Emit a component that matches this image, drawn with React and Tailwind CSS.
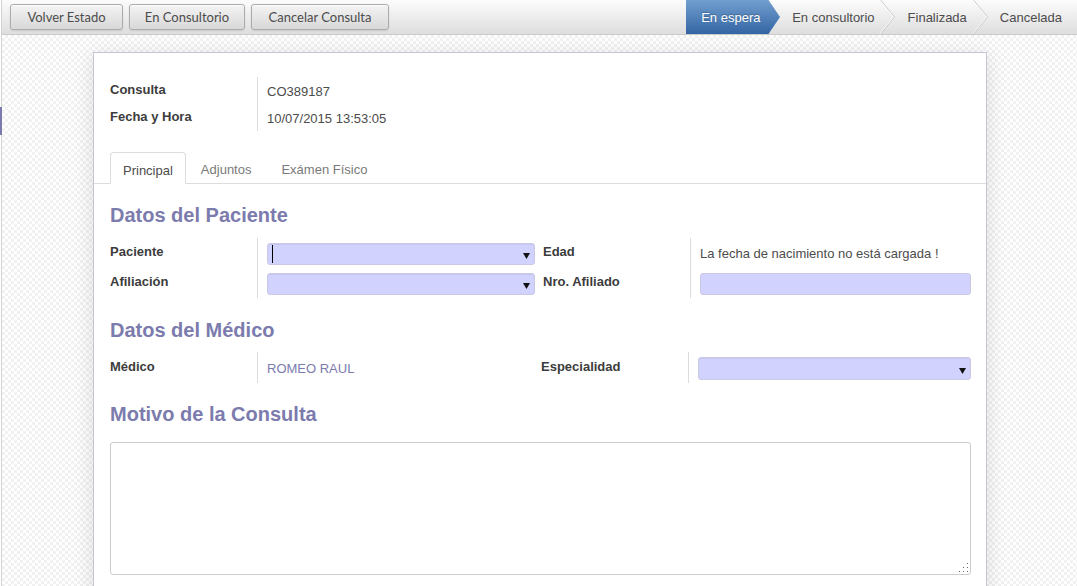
import React from "react";

function Chevron() {
  return (
    <svg width="16" height="34" viewBox="0 0 16 34" className="shrink-0">
      <polyline points="0.5,0 14.5,17 0.5,34" fill="none" stroke="#c8c8c8" strokeWidth="1" />
      <polyline points="-0.5,0 13.5,17 -0.5,34" fill="none" stroke="#ffffff" strokeWidth="1" opacity="0.8" />
    </svg>
  );
}

function ArrowDown() {
  return (
    <svg width="7" height="6" viewBox="0 0 7 6" className="shrink-0">
      <polygon points="0,0 7,0 3.5,6" fill="#111" />
    </svg>
  );
}

function ResizeDots() {
  const dots = [
    [9, 1],
    [9, 5], [5, 5],
    [9, 9], [5, 9], [1, 9],
  ];
  return (
    <svg width="11" height="11" viewBox="0 0 11 11" className="pointer-events-none absolute bottom-[2px] right-[2px]">
      {dots.map(([x, y], i) => (
        <rect key={i} x={x} y={y} width="1" height="1" fill="#666" />
      ))}
    </svg>
  );
}

function TopBar() {
  const btn =
    "h-[26px] rounded-[3px] border border-[#ababab] bg-gradient-to-b from-[#f4f4f4] to-[#d8d8d8] text-[13px] text-[#4c4c4c] font-['Lato','Open_Sans',sans-serif] shadow-[0_1px_2px_rgba(0,0,0,0.1),inset_0_1px_1px_rgba(255,255,255,0.9)] flex items-center justify-center";
  return (
    <div className="flex h-[35px] items-stretch border-b border-[#cacaca] bg-gradient-to-b from-[#fcfcfc] to-[#dedede]">
      <div className="flex items-center gap-[6px] pl-[8px]">
        <button className={btn + " w-[113px]"}>Volver Estado</button>
        <button className={btn + " w-[116px]"}>En Consultorio</button>
        <button className={btn + " w-[138px]"}>Cancelar Consulta</button>
      </div>
      <div className="ml-auto flex items-stretch text-[13px]">
        <div className="flex items-stretch">
          <div className="flex w-[82px] items-center bg-gradient-to-b from-[#729fcf] to-[#3465a4] pl-[15px] text-white [text-shadow:0_-1px_1px_rgba(0,0,0,0.25)]">
            En espera
          </div>
          <svg width="12" height="34" viewBox="0 0 12 34" className="shrink-0">
            <defs>
              <linearGradient id="ag" x1="0" y1="0" x2="0" y2="1">
                <stop offset="0" stopColor="#729fcf" />
                <stop offset="1" stopColor="#3465a4" />
              </linearGradient>
            </defs>
            <polygon points="0,0 0.5,0 12,17 0.5,34 0,34" fill="url(#ag)" />
          </svg>
        </div>
        <div className="flex items-center pl-[12px] pr-[5px] text-[#4c4c4c]">En consultorio</div>
        <Chevron />
        <div className="flex items-center pl-[12px] pr-[6px] text-[#4c4c4c]">Finalizada</div>
        <Chevron />
        <div className="flex items-center pl-[11px] pr-[15px] text-[#4c4c4c]">Cancelada</div>
      </div>
    </div>
  );
}

function Heading({ children, className = "" }) {
  return (
    <div className={"text-[20px] leading-[24px] font-bold text-[#7c7bad] " + className}>{children}</div>
  );
}

function M2OInput({ cursor = false, h = "h-[22px]" }) {
  return (
    <div
      className={
        h +
        " flex w-full items-center rounded-[3px] border border-[#c9c9e4] bg-[#d2d2ff] pl-[4px] pr-[4px] shadow-[inset_0_1px_1px_rgba(0,0,0,0.05)]"
      }
    >
      {cursor && <div className="h-[18px] w-px bg-black" />}
      <div className="ml-auto mt-[4px]">
        <ArrowDown />
      </div>
    </div>
  );
}

export default function App() {
  const label = "font-bold text-[#3c3c3c] border-r border-[#dcdcdc]";
  return (
    <div className="relative h-[586px] w-[1077px] overflow-hidden bg-white font-['Liberation_Sans',Arial,sans-serif] text-[13px] leading-[15px] text-[#4c4c4c]">
      <div className="absolute left-0 top-[107px] h-[28px] w-[2px] bg-[#7c7bad]" />
      <div className="ml-px h-full border-l border-[#d2d2d2]">
        <TopBar />
        <div className="h-[551px] overflow-hidden bg-[conic-gradient(#f1f1f1_25%,#ffffff_0_50%,#f1f1f1_0_75%,#ffffff_0)] bg-[length:6px_6px] pt-[17px]">
          <div className="ml-[91px] w-[894px] border border-[#c6c6d2] bg-white pl-[16px] pr-[15px] pt-[24px] pb-[60px] shadow-[0_4px_20px_rgba(0,0,0,0.13)]">
            {/* header group */}
            <div className="grid grid-cols-[148px_1fr]">
              <div className={label + " h-[27px] pt-[5px]"}>Consulta</div>
              <div className="pl-[9px] pt-[7px]">CO389187</div>
              <div className={label + " h-[27px] pt-[5px]"}>Fecha y Hora</div>
              <div className="pl-[9px] pt-[7px]">10/07/2015 13:53:05</div>
            </div>

            {/* tabs */}
            <div className="-ml-[16px] -mr-[15px] mt-[21px] flex h-[32px] items-stretch border-b border-[#dddddd] px-[16px]">
              <div className="-mb-px flex items-center rounded-t-[4px] border border-[#dddddd] border-b-white bg-white px-[12px] pt-[4px] text-[#4c4c4c]">
                Principal
              </div>
              <div className="flex items-center border border-transparent px-[14px] pt-[4px] text-[#7a7a7a]">Adjuntos</div>
              <div className="flex items-center border border-transparent px-[14px] pt-[4px] text-[#7a7a7a]">Exámen Físico</div>
            </div>

            <Heading className="mt-[19px]">Datos del Paciente</Heading>
            <div className="mt-[11px] grid grid-cols-[148px_285px_148px_1fr]">
              <div className={label + " h-[30px] pt-[6px]"}>Paciente</div>
              <div className="pl-[9px] pr-[8px] pt-[5px]">
                <M2OInput cursor />
              </div>
              <div className={label + " h-[30px] pt-[6px]"}>Edad</div>
              <div className="pl-[9px] pt-[8px]">La fecha de nacimiento no está cargada !</div>

              <div className={label + " h-[30px] pt-[6px]"}>Afiliación</div>
              <div className="pl-[9px] pr-[8px] pt-[5px]">
                <M2OInput />
              </div>
              <div className={label + " h-[30px] pt-[6px]"}>Nro. Afiliado</div>
              <div className="pl-[9px] pt-[5px]">
                <div className="h-[22px] w-full rounded-[3px] border border-[#c9c9e4] bg-[#d2d2ff]" />
              </div>
            </div>

            <Heading className="mt-[20px]">Datos del Médico</Heading>
            <div className="mt-[10px] grid grid-cols-[148px_283px_148px_1fr]">
              <div className={label + " h-[31px] pt-[7px]"}>Médico</div>
              <div className="pl-[9px] pt-[9px] text-[#7c7bad]">ROMEO RAUL</div>
              <div className={label + " h-[31px] pt-[7px]"}>Especialidad</div>
              <div className="pl-[9px] pt-[5px]">
                <M2OInput h="h-[23px]" />
              </div>
            </div>

            <Heading className="mt-[19px]">Motivo de la Consulta</Heading>
            <div className="relative mt-[16px]">
              <textarea className="block h-[133px] w-full resize-none rounded-[3px] border border-[#cccccc] bg-white outline-none" />
              <ResizeDots />
            </div>
          </div>
        </div>
      </div>
    </div>
  );
}
